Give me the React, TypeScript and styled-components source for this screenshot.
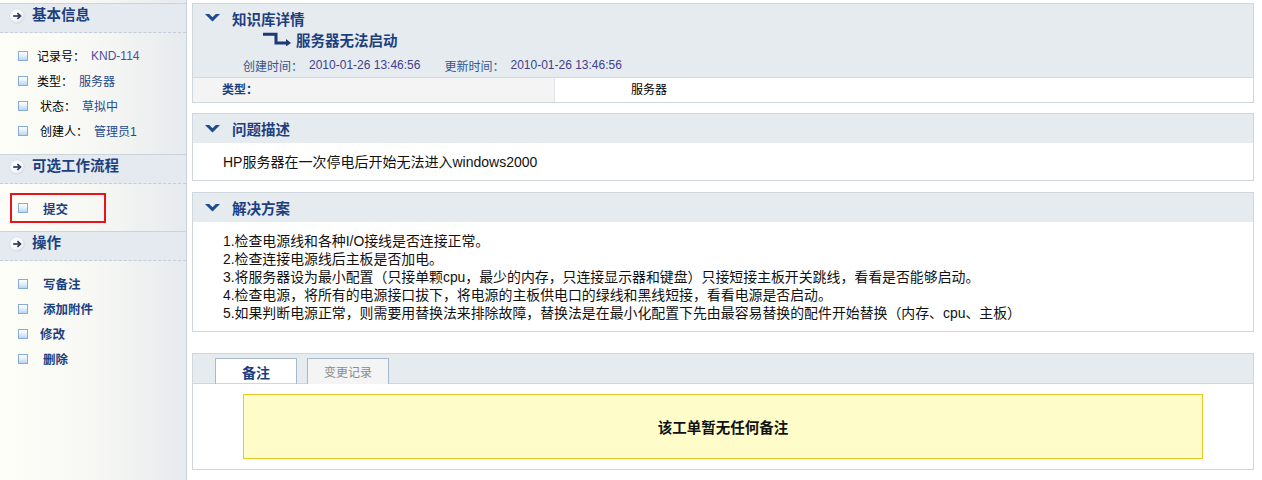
import React from 'react';
import styled, { createGlobalStyle } from 'styled-components';

const GlobalStyle = createGlobalStyle`
	html, body {
		margin: 0;
		padding: 0;
		background: #fff;
	}
	body {
		font-family: "Liberation Sans", Arial, "Noto Sans CJK SC", sans-serif;
		font-size: 12px;
		color: #000;
	}
`;

const BLUE = '#1c3f80';

/* ---------- sidebar ---------- */

const SideItems: { label: string; value: string; valueColor?: string; indent: number }[] = [
	{ label: '记录号：', value: 'KND-114', valueColor: '#4e4e9e', indent: 9 },
	{ label: '类型：', value: '服务器', indent: 9 },
	{ label: '状态：', value: '草拟中', indent: 12 },
	{ label: '创建人：', value: '管理员1', indent: 12 },
];

const Actions: { label: string; indent: number }[] = [
	{ label: '写备注', indent: 15 },
	{ label: '添加附件', indent: 15 },
	{ label: '修改', indent: 12 },
	{ label: '删除', indent: 15 },
];

const CircleArrow = () => (
	<svg width="16" height="16" viewBox="0 0 16 16">
		<defs>
			<radialGradient id="ca-g" cx="40%" cy="35%" r="70%">
				<stop offset="0%" stopColor="#ffffff" />
				<stop offset="70%" stopColor="#f3f5f8" />
				<stop offset="100%" stopColor="#d3d9e1" />
			</radialGradient>
		</defs>
		<circle cx="8" cy="8" r="7.3" fill="url(#ca-g)" stroke="#d5dae2" strokeWidth="0.8" />
		<path d="M4.2 8 H11.2" stroke="#2a3957" strokeWidth="1.7" />
		<path d="M8.4 5.2 L11.4 8 L8.4 10.8" stroke="#2a3957" strokeWidth="1.7" fill="none" />
	</svg>
);

const Chevron = () => (
	<svg width="15" height="8" viewBox="0 0 15 8">
		<polygon points="0,0 4.2,0 7.5,3.2 10.8,0 15,0 7.5,7.6" fill="#1e4a90" />
	</svg>
);

const TurnArrow = () => (
	<svg width="28" height="14" viewBox="0 0 28 14">
		<path d="M0 2.2 H13 V11 H24" stroke="#1b3a78" strokeWidth="3" fill="none" />
		<polygon points="23,7 28,11 23,14.5" fill="#1b3a78" />
	</svg>
);

const Page = styled.div`
	display: flex;
	align-items: stretch;
	min-height: 480px;
`;

const Sidebar = styled.aside`
	width: 186px;
	flex: none;
	padding-top: 3px;
	border-right: 1px solid #c9d1db;
	background: linear-gradient(to right, #fefef8 0%, #f7f8f4 50%, #e7eaee 100%);
`;

const SideHeader = styled.div`
	height: 28px;
	display: flex;
	align-items: flex-start;
	gap: 7px;
	padding-left: 9px;
	line-height: 22px;
	background: #e5eaf0;
	border-top: 1px solid #cbd3dd;
	border-bottom: 1px dashed #c4cdd8;
	font-size: 14.5px;
	font-weight: bold;
	color: ${BLUE};

	svg {
		margin-top: 4px;
	}
`;

const SideList = styled.ul<{ $top: number; $bottom: number }>`
	list-style: none;
	margin: 0;
	padding: ${({ $top }) => $top}px 0 ${({ $bottom }) => $bottom}px;
`;

const SideRow = styled.li<{ $indent: number; $action?: boolean }>`
	height: 25px;
	display: flex;
	align-items: center;
	padding-left: 18px;
	font-size: ${({ $action }) => ($action ? '12.5px' : '12px')};
	font-weight: ${({ $action }) => ($action ? 'bold' : 'normal')};
	color: ${({ $action }) => ($action ? BLUE : '#000')};

	.text {
		margin-left: ${({ $indent }) => $indent}px;
	}
`;

const Box = styled.span`
	width: 8px;
	height: 8px;
	flex: none;
	border: 1px solid #86acd6;
	background: linear-gradient(to bottom, #ffffff 0%, #e4f0fb 45%, #b9d6f1 100%);
`;

const Value = styled.span<{ $color?: string }>`
	margin-left: 6px;
	color: ${({ $color }) => $color || '#24488e'};
`;

const Highlight = styled.div`
	margin-left: 10px;
	width: 92px;
	height: 26px;
	border: 2px solid #e8141b;

	${SideRow} {
		height: 26px;
		padding-left: 6px;
	}
`;

/* ---------- main ---------- */

const Main = styled.main`
	flex: 1;
	margin: 3px 8px 0 5px;
	display: flex;
	flex-direction: column;
`;

const Panel = styled.section<{ $gap?: number }>`
	border: 1px solid #cfd6de;
	background: #fff;
	margin-top: ${({ $gap }) => $gap || 0}px;
`;

const PanelHeader = styled.div`
	height: 29px;
	display: flex;
	align-items: center;
	gap: 12px;
	padding-left: 12px;
	background: #e6ebf0;
	font-size: 14.5px;
	font-weight: bold;
	color: ${BLUE};
`;

const DetailHeader = styled.div`
	height: 69px;
	padding-top: 4px;
	background: #e6ebf0;
`;

const TitleRow = styled.div`
	height: 20px;
	display: flex;
	align-items: center;
	gap: 12px;
	padding-left: 12px;
	font-size: 14.5px;
	font-weight: bold;
	color: ${BLUE};
`;

const SubTitle = styled.div`
	height: 20px;
	margin-top: 1px;
	display: flex;
	align-items: center;
	gap: 5px;
	padding-left: 70px;
	font-size: 14.5px;
	font-weight: bold;
	color: ${BLUE};
`;

const MetaRow = styled.div`
	height: 16px;
	margin-top: 8px;
	display: flex;
	align-items: center;
	padding-left: 50px;
	font-size: 12px;
`;

const MetaLabel = styled.span<{ $space?: number }>`
	color: #34568e;
	margin-left: ${({ $space }) => $space || 0}px;
`;

const MetaValue = styled.span`
	color: #40408c;
	margin-left: 6px;
`;

const FieldRow = styled.div`
	display: flex;
	height: 24px;
	border-top: 1px solid #d3dae2;
	line-height: 24px;
	font-size: 12px;
`;

const FieldLabel = styled.div`
	width: 332px;
	padding-left: 29px;
	background: #f4f4f4;
	border-right: 1px solid #dfe3e8;
	font-weight: bold;
	color: ${BLUE};
`;

const FieldValue = styled.div`
	padding-left: 76px;
`;

const Description = styled.p`
	margin: 0;
	padding: 9px 30px 8px;
	line-height: 20px;
	font-size: 14px;
	color: #111;
`;

const Steps = styled.ol`
	list-style: none;
	margin: 0;
	padding: 10px 30px 9px;
	font-size: 13.9px;
	line-height: 18px;
	color: #111;
`;

const TabBar = styled.div`
	height: 29px;
	display: flex;
	align-items: flex-end;
	gap: 10px;
	padding-left: 22px;
	background: #e6ebf0;
	border-bottom: 1px solid #cfd6de;
`;

const Tab = styled.div<{ $active?: boolean }>`
	width: 80px;
	height: 25px;
	margin-bottom: -1px;
	display: flex;
	align-items: center;
	justify-content: center;
	border: 1px solid #a9b9cc;
	border-bottom: none;
	background: ${({ $active }) => ($active ? '#fff' : '#f4f4f4')};
	font-size: ${({ $active }) => ($active ? '14px' : '12px')};
	font-weight: ${({ $active }) => ($active ? 'bold' : 'normal')};
	color: ${({ $active }) => ($active ? BLUE : '#8a8a8a')};
	box-shadow: ${({ $active }) => ($active ? 'inset 0 -1px 0 #cfd6de' : 'none')};
`;

const TabBody = styled.div`
	padding: 10px 50px;
`;

const Notice = styled.div`
	height: 63px;
	display: flex;
	align-items: center;
	justify-content: center;
	background: #fefdc9;
	border: 1px solid #efc52c;
	font-size: 14.5px;
	font-weight: bold;
	color: #111;
`;

const steps = [
	'1.检查电源线和各种I/O接线是否连接正常。',
	'2.检查连接电源线后主板是否加电。',
	'3.将服务器设为最小配置（只接单颗cpu，最少的内存，只连接显示器和键盘）只接短接主板开关跳线，看看是否能够启动。',
	'4.检查电源，将所有的电源接口拔下，将电源的主板供电口的绿线和黑线短接，看看电源是否启动。',
	'5.如果判断电源正常，则需要用替换法来排除故障，替换法是在最小化配置下先由最容易替换的配件开始替换（内存、cpu、主板）',
];

export default function App() {
	return (
		<>
			<GlobalStyle />
			<Page>
				<Sidebar>
					<SideHeader>
						<CircleArrow />
						基本信息
					</SideHeader>
					<SideList $top={10} $bottom={11}>
						{SideItems.map((it) => (
							<SideRow key={it.label} $indent={it.indent}>
								<Box />
								<span className="text">{it.label}</span>
								<Value $color={it.valueColor}>{it.value}</Value>
							</SideRow>
						))}
					</SideList>

					<SideHeader>
						<CircleArrow />
						可选工作流程
					</SideHeader>
					<SideList $top={9} $bottom={8}>
						<Highlight>
							<SideRow $indent={15} $action>
								<Box />
								<span className="text">提交</span>
							</SideRow>
						</Highlight>
					</SideList>

					<SideHeader>
						<CircleArrow />
						操作
					</SideHeader>
					<SideList $top={10} $bottom={10}>
						{Actions.map((a) => (
							<SideRow key={a.label} $indent={a.indent} $action>
								<Box />
								<span className="text">{a.label}</span>
							</SideRow>
						))}
					</SideList>
				</Sidebar>

				<Main>
					<Panel>
						<DetailHeader>
							<TitleRow>
								<Chevron />
								知识库详情
							</TitleRow>
							<SubTitle>
								<TurnArrow />
								服务器无法启动
							</SubTitle>
							<MetaRow>
								<MetaLabel>创建时间：</MetaLabel>
								<MetaValue>2010-01-26 13:46:56</MetaValue>
								<MetaLabel $space={24}>更新时间：</MetaLabel>
								<MetaValue>2010-01-26 13:46:56</MetaValue>
							</MetaRow>
						</DetailHeader>
						<FieldRow>
							<FieldLabel>类型：</FieldLabel>
							<FieldValue>服务器</FieldValue>
						</FieldRow>
					</Panel>

					<Panel $gap={10}>
						<PanelHeader>
							<Chevron />
							问题描述
						</PanelHeader>
						<Description>HP服务器在一次停电后开始无法进入windows2000</Description>
					</Panel>

					<Panel $gap={11}>
						<PanelHeader>
							<Chevron />
							解决方案
						</PanelHeader>
						<Steps>
							{steps.map((s) => (
								<li key={s}>{s}</li>
							))}
						</Steps>
					</Panel>

					<Panel $gap={21}>
						<TabBar>
							<Tab $active>备注</Tab>
							<Tab>变更记录</Tab>
						</TabBar>
						<TabBody>
							<Notice>该工单暂无任何备注</Notice>
						</TabBody>
					</Panel>
				</Main>
			</Page>
		</>
	);
}
